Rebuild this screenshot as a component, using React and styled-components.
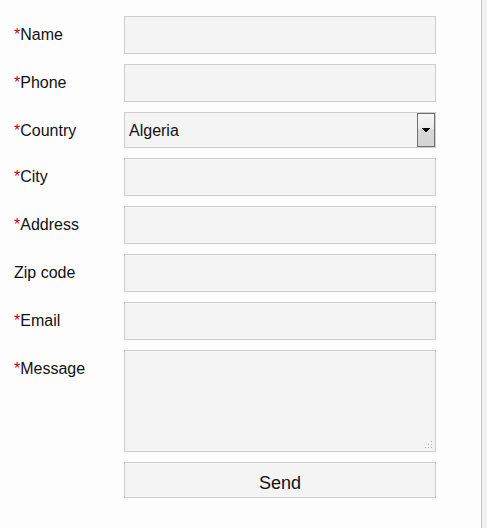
import React from "react";
import styled, { createGlobalStyle } from "styled-components";

const GlobalStyle = createGlobalStyle`
  html, body {
    margin: 0;
    padding: 0;
    background: #f0f0f2;
    font-family: "Liberation Sans", Arial, sans-serif;
  }
`;

const Page = styled.div`
  width: 482px;
  min-height: 528px;
  background: #fdfdfd;
  border-right: 1px solid #c8c8cc;
  box-sizing: border-box;
  padding: 16px 0 0 14px;
`;

const Form = styled.form`
  display: grid;
  grid-template-columns: 110px 312px;
  row-gap: 10px;
`;

const Label = styled.label`
  font-size: 16px;
  line-height: 18px;
  padding-top: 10px;
  color: #111;
`;

const Star = styled.span`
  color: #a01010;
`;

const Input = styled.input`
  box-sizing: border-box;
  width: 312px;
  height: 38px;
  margin: 0;
  border: 1px solid #cdcdcd;
  background: #f4f4f4;
  font: 16px "Liberation Sans", Arial, sans-serif;
  padding: 0 4px;
  outline: none;
`;

const SelectBox = styled.div`
  box-sizing: border-box;
  width: 312px;
  height: 36px;
  border: 1px solid #cdcdcd;
  background: #f4f4f4;
  display: flex;
  align-items: center;
  justify-content: space-between;
  padding: 0 0 0 4px;
  font-size: 16px;
  color: #111;

  span {
    padding-top: 2px;
  }
`;

const ArrowButton = styled.div`
  box-sizing: border-box;
  width: 18px;
  height: 34px;
  border: 1px solid #707070;
  background: linear-gradient(#f6f6f6 0%, #ececec 45%, #d8d8d8 50%, #d4d4d4 100%);
  display: flex;
  align-items: center;
  justify-content: center;
`;

const TextAreaWrap = styled.div`
  position: relative;
  width: 312px;
  height: 102px;
`;

const TextArea = styled.textarea`
  box-sizing: border-box;
  width: 312px;
  height: 102px;
  margin: 0;
  display: block;
  border: 1px solid #cdcdcd;
  background: #f4f4f4;
  resize: none;
  outline: none;
  font: 16px "Liberation Sans", Arial, sans-serif;
`;

const Grip = styled.svg`
  position: absolute;
  right: 3px;
  bottom: 3px;
`;

const SendButton = styled.button`
  grid-column: 2;
  box-sizing: border-box;
  width: 312px;
  height: 36px;
  border: 1px solid #cdcdcd;
  background: #f4f4f4;
  font: 18px "Liberation Sans", Arial, sans-serif;
  color: #111;
  padding: 6px 0 0;
`;

const fields = [
  { label: "Name", req: true },
  { label: "Phone", req: true },
  { label: "Country", req: true, select: "Algeria" },
  { label: "City", req: true },
  { label: "Address", req: true },
  { label: "Zip code", req: false },
  { label: "Email", req: true },
  { label: "Message", req: true, area: true },
];

export default function App() {
  return (
    <>
      <GlobalStyle />
      <Page>
        <Form onSubmit={(e) => e.preventDefault()}>
          {fields.map((f) => (
            <React.Fragment key={f.label}>
              <Label>
                {f.req ? <Star>*</Star> : null}
                {f.label}
              </Label>
              {f.select ? (
                <SelectBox>
                  <span>{f.select}</span>
                  <ArrowButton>
                    <svg width="8" height="5" viewBox="0 0 8 5">
                      <path d="M0 0h8v1H0zM1 1h6v1H1zM2 2h4v1H2zM3 3h2v1H3z" fill="#000" />
                    </svg>
                  </ArrowButton>
                </SelectBox>
              ) : f.area ? (
                <TextAreaWrap>
                  <TextArea />
                  <Grip width="8" height="8" viewBox="0 0 8 8">
                    <rect x="6" y="0" width="1" height="1" fill="#aaa" />
                    <rect x="3" y="3" width="1" height="1" fill="#aaa" />
                    <rect x="6" y="3" width="1" height="1" fill="#aaa" />
                    <rect x="0" y="6" width="1" height="1" fill="#aaa" />
                    <rect x="3" y="6" width="1" height="1" fill="#aaa" />
                    <rect x="6" y="6" width="1" height="1" fill="#aaa" />
                  </Grip>
                </TextAreaWrap>
              ) : (
                <Input />
              )}
            </React.Fragment>
          ))}
          <SendButton type="submit">Send</SendButton>
        </Form>
      </Page>
    </>
  );
}
